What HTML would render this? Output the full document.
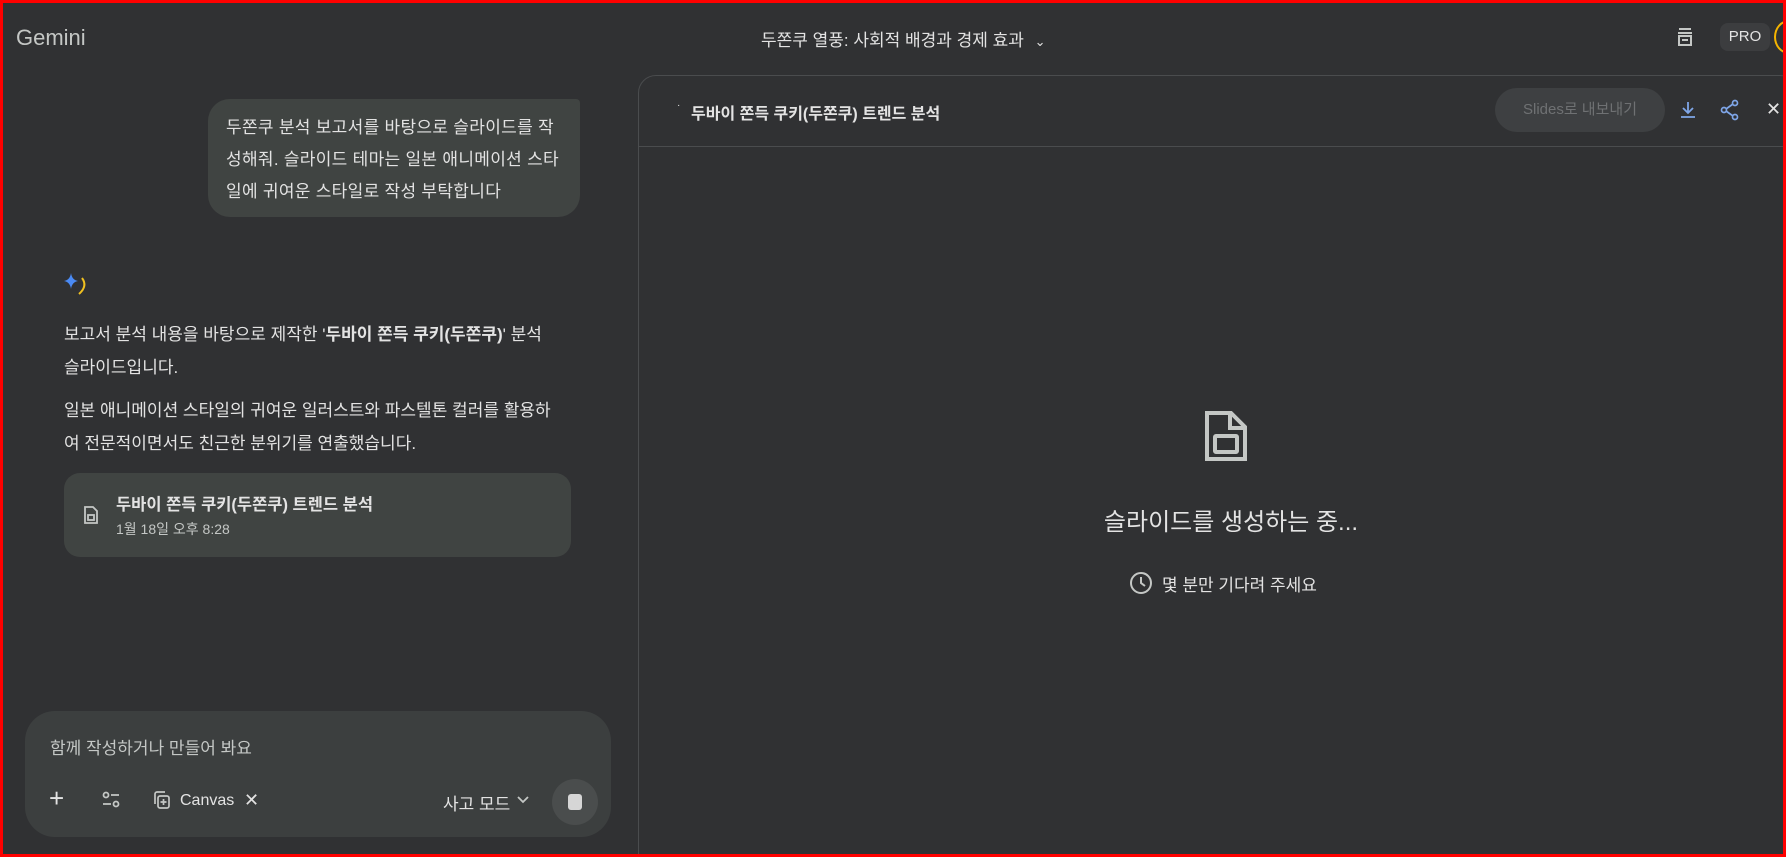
<!DOCTYPE html>
<html><head><meta charset="utf-8"><style>
*{margin:0;padding:0;box-sizing:border-box}
html,body{width:1786px;height:857px;overflow:hidden}
body{background:#303133;font-family:"Liberation Sans","Noto Sans CJK KR",sans-serif;color:#e3e3e3;position:relative}
.a{position:absolute}
</style></head><body>
<div class="a" style="left:16px;top:25px;font-size:22px;color:#c4c7c5">Gemini</div>
<div class="a" style="left:761px;top:26px;font-size:17px;color:#e3e3e3">두쫀쿠 열풍: 사회적 배경과 경제 효과 <span style="font-size:13px;margin-left:6px">&#x2304;</span></div>
<svg class="a" style="left:1673px;top:25px" width="24" height="24" viewBox="0 0 24 24" fill="none" stroke="#c4c7c5" stroke-width="2"><path d="M6 4h12M5 8h14M6 11h12v9H6z M9 15h6"/></svg>
<div class="a" style="left:1720px;top:23px;width:50px;height:28px;border-radius:8px;background:#3c3d3f;font-size:15px;color:#e3e3e3;text-align:center;line-height:28px">PRO</div>
<div class="a" style="left:1774px;top:20px;width:30px;height:34px;border-radius:50%;border:2px solid #f5b400"></div>

<div class="a" style="left:208px;top:99px;width:372px;height:118px;background:#404442;border-radius:22px 4px 22px 22px;padding:13px 18px;font-size:17px;letter-spacing:0.3px;line-height:32px;color:#e3e3e3">두쫀쿠 분석 보고서를 바탕으로 슬라이드를 작성해줘. 슬라이드 테마는 일본 애니메이션 스타일에 귀여운 스타일로 작성 부탁합니다</div>

<svg class="a" style="left:62px;top:270px" width="28" height="28" viewBox="0 0 28 28"><path d="M9 3 Q10 10 16 11 Q10 12 9 19 Q8 12 2 11 Q8 10 9 3z" fill="#4a8af4"/><path d="M20 8 Q26 16 17 24" stroke="#f0c020" stroke-width="2" fill="none"/></svg>

<div class="a" style="left:64px;top:318px;width:496px;font-size:17px;line-height:33px;color:#e3e3e3">보고서 분석 내용을 바탕으로 제작한 '<b>두바이 쫀득 쿠키(두쫀쿠)</b>' 분석 슬라이드입니다.</div>
<div class="a" style="left:64px;top:394px;width:496px;font-size:17px;line-height:33px;color:#e3e3e3">일본 애니메이션 스타일의 귀여운 일러스트와 파스텔톤 컬러를 활용하여 전문적이면서도 친근한 분위기를 연출했습니다.</div>

<div class="a" style="left:64px;top:473px;width:507px;height:84px;background:#404442;border-radius:16px"></div>
<svg class="a" style="left:82px;top:505px" width="18" height="20" viewBox="0 0 18 20" fill="none" stroke="#c4c7c5" stroke-width="1.8"><path d="M3 2h8l4 4v12H3z"/><rect x="6" y="10" width="6" height="5"/></svg>
<div class="a" style="left:116px;top:491px;font-size:16.5px;font-weight:bold;color:#e3e3e3">두바이 쫀득 쿠키(두쫀쿠) 트렌드 분석</div>
<div class="a" style="left:116px;top:519px;font-size:14px;color:#c4c7c5">1월 18일 오후 8:28</div>

<div class="a" style="left:25px;top:711px;width:586px;height:126px;background:#3c3f3f;border-radius:30px"></div>
<div class="a" style="left:50px;top:734px;font-size:17px;color:#c4c7c5">함께 작성하거나 만들어 봐요</div>
<div class="a" style="left:49px;top:785px;font-size:26px;color:#e3e3e3;line-height:26px;font-weight:300">+</div>
<svg class="a" style="left:101px;top:791px" width="20" height="18" viewBox="0 0 20 18" fill="none" stroke="#c4c7c5" stroke-width="1.8"><circle cx="5" cy="4" r="2.5"/><path d="M10 4h8M2 13h8"/><circle cx="15" cy="13" r="2.5"/></svg>
<svg class="a" style="left:152px;top:790px" width="20" height="20" viewBox="0 0 20 20" fill="none" stroke="#c4c7c5" stroke-width="1.7"><path d="M3 14V4a2 2 0 0 1 2-2h8"/><rect x="6" y="6" width="11" height="12" rx="2"/><path d="M11.5 9v6M8.5 12h6"/></svg>
<div class="a" style="left:180px;top:792px;font-size:16px;color:#e3e3e3">Canvas</div>
<div class="a" style="left:244px;top:790px;font-size:18px;color:#e3e3e3">✕</div>
<div class="a" style="left:443px;top:790px;font-size:17px;color:#e3e3e3">사고 모드</div>
<svg class="a" style="left:516px;top:795px" width="14" height="10" viewBox="0 0 14 10"><path d="M2 2l5 5 5-5" stroke="#c4c7c5" stroke-width="1.8" fill="none"/></svg>
<div class="a" style="left:552px;top:779px;width:46px;height:46px;border-radius:50%;background:#4a4d4d"></div>
<div class="a" style="left:568px;top:794px;width:14px;height:16px;border-radius:3px;background:#d6d6d6"></div>

<div class="a" style="left:638px;top:75px;width:1160px;height:800px;border:1px solid #4a4c4e;border-radius:18px;background:#303133"></div>
<div class="a" style="left:639px;top:146px;width:1150px;height:1px;background:#4a4c4e"></div>
<div class="a" style="left:677px;top:100px;font-size:10px;color:#e3e3e3">·</div>
<div class="a" style="left:691px;top:100px;font-size:16px;font-weight:bold;color:#e3e3e3">두바이 쫀득 쿠키(두쫀쿠) 트렌드 분석</div>
<div class="a" style="left:1495px;top:88px;width:170px;height:44px;border-radius:22px;background:#3e4042;font-size:15px;color:#6f7173;text-align:center;line-height:44px">Slides로 내보내기</div>
<svg class="a" style="left:1679px;top:100px" width="18" height="20" viewBox="0 0 18 20" fill="none" stroke="#7fa6e8" stroke-width="1.8"><path d="M9 2v11M4 8l5 5 5-5M2 17h14"/></svg>
<svg class="a" style="left:1720px;top:99px" width="20" height="22" viewBox="0 0 20 22" fill="none" stroke="#7fa6e8" stroke-width="1.7"><circle cx="15" cy="4" r="2.5"/><circle cx="4" cy="11" r="2.5"/><circle cx="15" cy="18" r="2.5"/><path d="M6 10l7-5M6 12l7 5"/></svg>
<div class="a" style="left:1766px;top:99px;font-size:18px;color:#e3e3e3">✕</div>

<svg class="a" style="left:1202px;top:409px" width="48" height="54" viewBox="0 0 48 54" fill="none" stroke="#c4c7c5" stroke-width="4"><path d="M5 4h24l14 14v32H5z M28 4v15h15"/><rect x="13" y="27" width="22" height="16" rx="1"/></svg>
<div class="a" style="left:1089px;top:502px;width:284px;text-align:center;font-size:24px;color:#e3e3e3">슬라이드를 생성하는 중...</div>
<svg class="a" style="left:1129px;top:571px" width="24" height="24" viewBox="0 0 24 24" fill="none" stroke="#c4c7c5" stroke-width="2"><circle cx="12" cy="12" r="10"/><path d="M12 6v6l4 3"/></svg>
<div class="a" style="left:1162px;top:571px;font-size:17px;color:#e3e3e3">몇 분만 기다려 주세요</div>

<div class="a" style="left:0;top:0;width:1786px;height:857px;border:3px solid #ff0000;z-index:10"></div>
</body></html>
